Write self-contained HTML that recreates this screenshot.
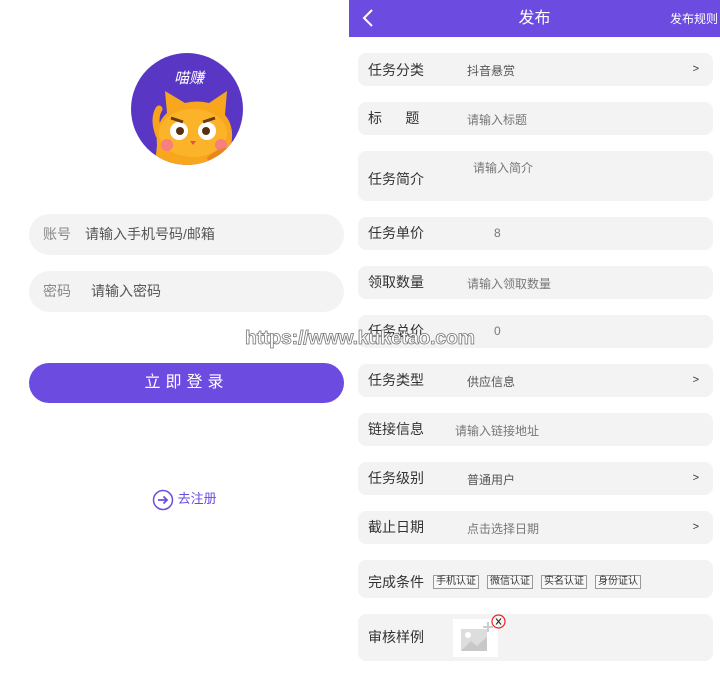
<!DOCTYPE html>
<html><head><meta charset="utf-8"><style>
*{margin:0;padding:0;box-sizing:border-box}
body{width:720px;height:678px;background:#fff;font-family:"Liberation Sans","Noto Sans CJK SC",sans-serif;position:relative;overflow:hidden;color:#333}
.a{position:absolute}
.inp{position:absolute;left:29px;width:315px;height:41px;border-radius:21px;background:#f3f3f3;font-size:14px;color:#555;line-height:41px}
.row{position:absolute;left:358px;width:355px;background:#f3f3f3;border-radius:8px;font-size:14px;color:#333}
.row .l{position:absolute;left:10px}
.row .v{position:absolute;font-size:12px;color:#555}
.row .g{position:absolute;right:14px;font-size:11px;color:#333}
.tag{display:inline-block;border:1px solid #999;font-size:10px;line-height:12px;padding:0 2px;margin-right:8px;color:#333;background:#f7f7f7}
</style></head><body>
<!-- logo -->
<svg class="a" style="left:131px;top:53px" width="112" height="112" viewBox="0 0 112 112">
<defs><clipPath id="c"><circle cx="56" cy="56" r="56"/></clipPath></defs>
<circle cx="56" cy="56" r="56" fill="#5a36c4"/>
<g clip-path="url(#c)">
<path d="M28 82 Q22 66 28 56" stroke="#f8a31c" stroke-width="7" fill="none" stroke-linecap="round"/>
<path d="M22 130 L26 92 Q24 70 36 60 L34 38 L54 50 Q66 47 78 50 L96 38 L94 62 Q104 74 100 92 L102 130 Z" fill="#f8a61e"/>
<ellipse cx="62" cy="80" rx="34" ry="24" fill="#fbb42a"/>
<circle cx="48" cy="78" r="9" fill="#fff"/><circle cx="76" cy="78" r="9" fill="#fff"/>
<circle cx="49" cy="78" r="4" fill="#5a2e10"/><circle cx="75" cy="78" r="4" fill="#5a2e10"/>
<path d="M40 65 L52 69 M84 65 L72 69" stroke="#6a3a12" stroke-width="3"/>
<circle cx="36" cy="92" r="6" fill="#f77f7f"/><circle cx="90" cy="92" r="6" fill="#f77f7f"/>
<path d="M59 88 L65 88 L62 92Z" fill="#e05050"/>
<path d="M78 108 Q92 96 98 100" stroke="#e8861a" stroke-width="8" fill="none"/>
</g>
<text x="58" y="30" font-size="15" fill="#fff" text-anchor="middle" font-family="Noto Sans CJK SC" font-style="italic">喵赚</text>
</svg>
<div class="inp" style="top:214px"><span style="margin-left:14px;color:#888">账号</span><span style="margin-left:14px">请输入手机号码/邮箱</span></div>
<div class="inp" style="top:271px"><span style="margin-left:14px;color:#888">密码</span><span style="margin-left:20px">请输入密码</span></div>
<div class="a" style="left:29px;top:363px;width:315px;height:40px;border-radius:20px;background:#6c4be0;color:#fff;font-size:16px;line-height:40px;text-align:center;letter-spacing:5px">立即登录</div>
<div class="a" style="left:152px;top:488px;font-size:13px;color:#6c4be0;line-height:22px">
<svg width="22" height="22" viewBox="0 0 22 22" style="vertical-align:middle"><circle cx="11" cy="11" r="9.5" fill="none" stroke="#6c4be0" stroke-width="1.5"/><path d="M6 11H15M11.5 7.5L15 11L11.5 14.5" stroke="#6c4be0" stroke-width="1.8" fill="none"/></svg> 去注册</div>
<!-- header -->
<div class="a" style="left:349px;top:0;width:371px;height:37px;background:#6c4be0;color:#fff">
<svg class="a" style="left:12px;top:8px" width="14" height="20" viewBox="0 0 14 20"><path d="M11 2L3 10L11 18" stroke="#fff" stroke-width="2" fill="none"/></svg>
<div class="a" style="left:0;width:371px;text-align:center;top:9px;font-size:16px;line-height:20px">发布</div>
<div class="a" style="left:321px;top:10px;font-size:12px;white-space:nowrap">发布规则</div>
</div>
<div class="row" style="top:53px;height:33px"><span class="l" style="top:7px">任务分类</span><span class="v" style="left:109px;top:9px">抖音悬赏</span><span class="g" style="top:10px">&gt;</span></div>
<div class="row" style="top:102px;height:33px"><span class="l" style="top:6px">标&nbsp;&nbsp;&nbsp;&nbsp;&nbsp;&nbsp;题</span><span class="v" style="left:109px;top:9px;color:#777">请输入标题</span></div>
<div class="row" style="top:151px;height:50px"><span class="l" style="top:18px">任务简介</span><span class="v" style="left:115px;top:8px;color:#777">请输入简介</span></div>
<div class="row" style="top:217px;height:33px"><span class="l" style="top:6px">任务单价</span><span class="v" style="left:136px;top:9px;color:#777">8</span></div>
<div class="row" style="top:266px;height:33px"><span class="l" style="top:6px">领取数量</span><span class="v" style="left:109px;top:9px;color:#777">请输入领取数量</span></div>
<div class="row" style="top:315px;height:33px"><span class="l" style="top:6px">任务总价</span><span class="v" style="left:136px;top:9px;color:#777">0</span></div>
<div class="row" style="top:364px;height:33px"><span class="l" style="top:6px">任务类型</span><span class="v" style="left:109px;top:9px">供应信息</span><span class="g" style="top:10px">&gt;</span></div>
<div class="row" style="top:413px;height:33px"><span class="l" style="top:6px">链接信息</span><span class="v" style="left:97px;top:9px;color:#777">请输入链接地址</span></div>
<div class="row" style="top:462px;height:33px"><span class="l" style="top:6px">任务级别</span><span class="v" style="left:109px;top:9px">普通用户</span><span class="g" style="top:10px">&gt;</span></div>
<div class="row" style="top:511px;height:33px"><span class="l" style="top:6px">截止日期</span><span class="v" style="left:109px;top:9px;color:#777">点击选择日期</span><span class="g" style="top:10px">&gt;</span></div>
<div class="row" style="top:560px;height:38px"><span class="l" style="top:12px">完成条件</span><span class="a" style="left:75px;top:11px;white-space:nowrap"><span class="tag">手机认证</span><span class="tag">微信认证</span><span class="tag">实名认证</span><span class="tag">身份证认</span></span></div>
<div class="row" style="top:614px;height:47px"><span class="l" style="top:13px">审核样例</span>
<div class="a" style="left:95px;top:5px;width:45px;height:38px;background:#fff">
<svg width="45" height="38" viewBox="0 0 45 38"><rect x="8" y="10" width="26" height="22" fill="#ddd"/><path d="M8 32L18 22L24 27L34 18V32Z" fill="#c8c8c8"/><circle cx="15" cy="16" r="3" fill="#fff"/><path d="M35 3V13M30 8H40" stroke="#ccc" stroke-width="2"/></svg></div>
<svg class="a" style="left:133px;top:0" width="15" height="15" viewBox="0 0 15 15"><circle cx="7.5" cy="7.5" r="6.5" fill="none" stroke="#e22" stroke-width="1.2"/><path d="M5 4.5L10 10.5M10 4.5L5 10.5" stroke="#222" stroke-width="1"/></svg>
</div>
<div class="a" style="left:245px;top:327px;font-size:19.5px;color:#fff;-webkit-text-stroke:0.8px #777;white-space:nowrap;font-weight:bold;letter-spacing:-0.2px">https://www.kuketao.com</div>
</body></html>
